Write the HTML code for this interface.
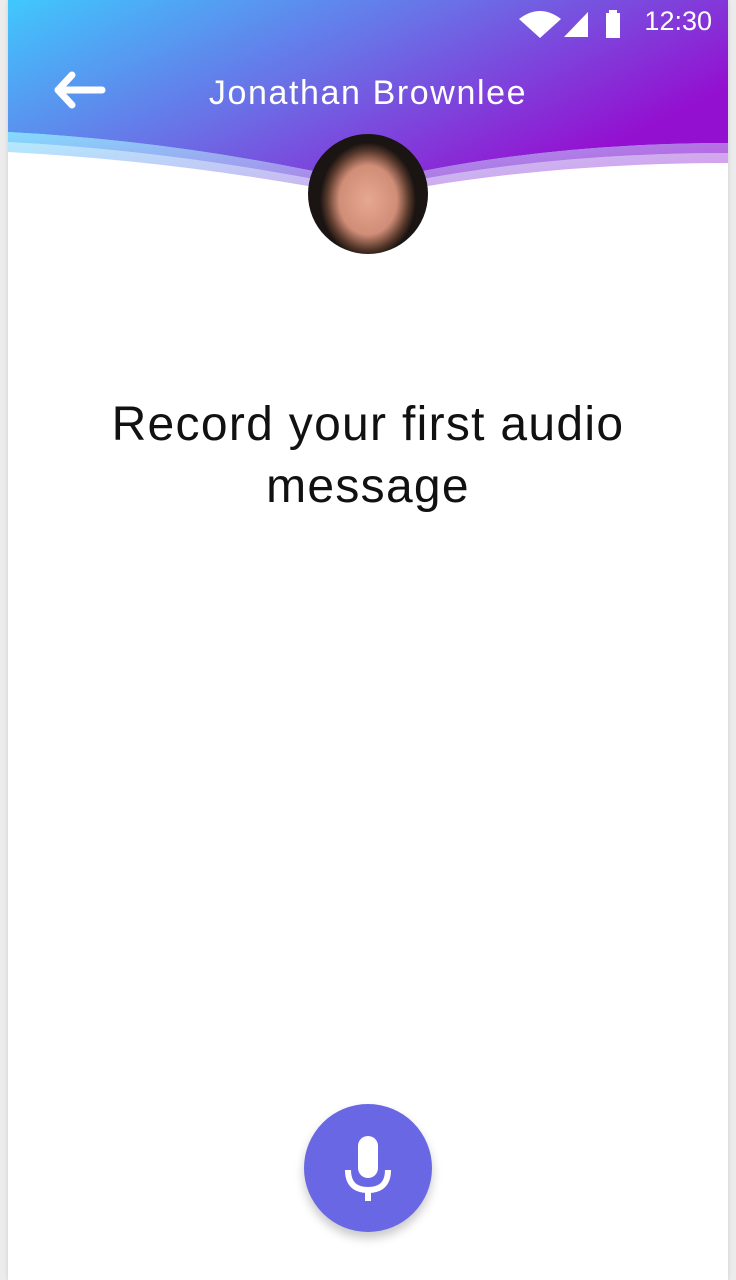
<!DOCTYPE html>
<html><head><meta charset="utf-8"><style>
html,body{margin:0;padding:0;}
body{width:736px;height:1280px;background:#ececec;position:relative;overflow:hidden;font-family:"Liberation Sans",sans-serif;}
.page{position:absolute;left:8px;top:0;width:720px;height:1280px;background:#fff;box-shadow:0 0 4px rgba(0,0,0,.15);overflow:hidden;}
.hdr{position:absolute;left:0;top:0;}
.title{position:absolute;left:0;width:720px;top:74px;text-align:center;color:#fff;font-size:34px;letter-spacing:1.6px;}
.time{position:absolute;right:16px;top:6px;color:#fff;font-size:27px;}
.msg{position:absolute;left:0;width:720px;top:394px;text-align:center;font-size:48px;line-height:62px;color:#111;letter-spacing:1.3px;}
.av{position:absolute;left:300px;top:134px;width:120px;height:120px;border-radius:50%;background:radial-gradient(ellipse 40% 48% at 50% 55%,#e6a890 0%,#d08d77 60%,#5a3a2c 85%,#1a1412 100%);overflow:hidden;}
.mic{position:absolute;left:296px;top:1104px;width:128px;height:128px;border-radius:50%;background:#6a67e4;box-shadow:0 6px 10px rgba(0,0,0,.22);}
</style></head><body>
<div class="page">
<svg class="hdr" width="720" height="200" viewBox="0 0 720 200">
<defs><linearGradient id="g" x1="0" y1="0" x2="1" y2="0.5"><stop offset="0" stop-color="#40c8fd"/><stop offset="0.5" stop-color="#6a70e6"/><stop offset="1" stop-color="#9410d0"/></linearGradient></defs>
<path d="M0 0H720V143Q560 143 420 170Q360 182 300 170Q150 140 0 132Z" fill="url(#g)"/>
<path d="M0 132Q150 140 300 170Q360 182 420 170Q560 143 720 143V153Q560 153 420 178Q360 190 300 178Q150 150 0 142Z" fill="url(#g)" opacity=".65"/>
<path d="M0 142Q150 150 300 178Q360 190 420 178Q560 153 720 153V163Q560 163 420 186Q360 196 300 186Q150 160 0 152Z" fill="url(#g)" opacity=".4"/>
<path d="M50 90H94M50 90L64 75M50 90L64 105" stroke="#fff" stroke-width="7" stroke-linecap="round" fill="none"/>
<path d="M511 19Q532 3 553 19L532 38Z" fill="#fff"/>
<path d="M556 37L580 12V37Z" fill="#fff"/>
<rect x="598" y="13" width="14" height="25" fill="#fff"/><rect x="601" y="10" width="8" height="4" fill="#fff"/>
</svg>
<div class="time">12:30</div>
<div class="title">Jonathan Brownlee</div>
<div class="av"></div>
<div class="msg">Record your first audio<br>message</div>
<div class="mic"><svg width="128" height="128" viewBox="0 0 128 128">
<rect x="54" y="32" width="20" height="42" rx="10" fill="#fff"/>
<path d="M44 66Q44 86 64 86Q84 86 84 66" stroke="#fff" stroke-width="6" fill="none"/>
<rect x="61" y="85" width="6" height="12" fill="#fff"/>
</svg></div>
</div>
</body></html>
